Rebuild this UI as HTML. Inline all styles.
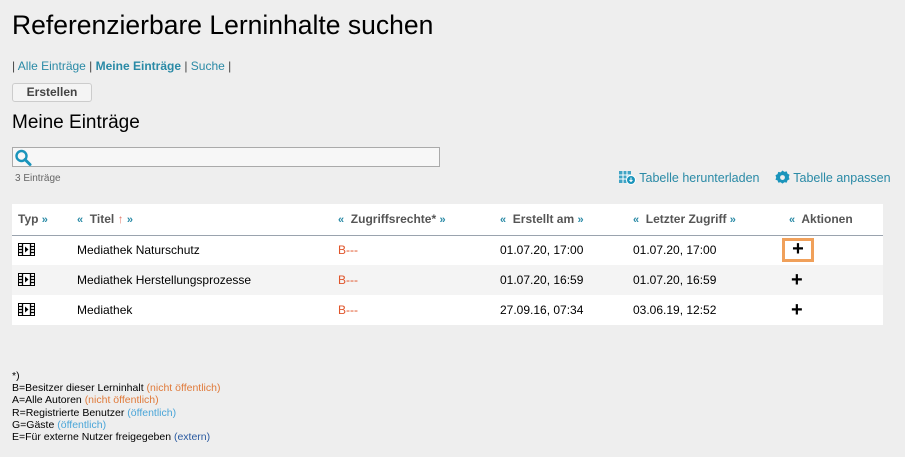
<!DOCTYPE html>
<html><head><meta charset="utf-8"><style>
*{margin:0;padding:0;box-sizing:border-box}
body{width:905px;height:457px;background:#eeeeee;font-family:"Liberation Sans",Arial,sans-serif;position:relative;overflow:hidden;color:#000}
.a{position:absolute;white-space:nowrap}
a{color:#2a8aa6;text-decoration:none}
.h1{left:12px;top:10px;font-size:26.5px}
.nav{left:12px;top:59px;font-size:12px;color:#444}
.btn{left:12px;top:83px;width:80px;height:19px;border:1px solid #ccc;border-radius:3px;background:#f4f4f4;font-size:12px;font-weight:bold;color:#444;text-align:center;line-height:17px}
.h2{left:12px;top:112px;font-size:19px}
.search{left:12px;top:147px;width:428px;height:20px;border:1px solid #aaa;background:#f7f7f7}
.cnt{left:15px;top:173px;font-size:10px;color:#666}
.tool{top:170px;font-size:12.5px;color:#2a8aa6}
table{position:absolute;left:12px;top:204px;width:871px;border-collapse:collapse;font-size:12px}
th{height:31px;text-align:left;font-weight:bold;color:#555;border-bottom:1px solid #9aa3ae;background:#fff;padding:0}
td{height:30px;padding:0}
tr.w td{background:#fff}
tr.g td{background:#f4f4f4}
.r{color:#e0542a}
.sm{color:#2a8aa6;font-size:11px}
.foot{left:12px;top:370px;font-size:10.5px;line-height:12.2px}
.o{color:#e07a3a}.b{color:#4aa5d8}.bl{color:#2a5aa0}
</style></head><body>
<div class="a h1">Referenzierbare Lerninhalte suchen</div>
<div class="a nav">| <a>Alle Einträge</a> | <a style="font-weight:bold">Meine Einträge</a> | <a>Suche</a> |</div>
<div class="a btn">Erstellen</div>
<div class="a h2">Meine Einträge</div>
<div class="a search"><svg width="20" height="18" style="position:absolute;left:1px;top:1px" viewBox="0 0 20 18"><circle cx="7.5" cy="7" r="5" fill="none" stroke="#1a94bb" stroke-width="2.4"/><path d="M11 10.5l5 5" stroke="#1a94bb" stroke-width="3" stroke-linecap="round"/></svg></div>
<div class="a cnt">3 Einträge</div>
<div class="a tool" style="left:619px"><svg width="17" height="15" style="vertical-align:-3px" viewBox="0 0 17 15"><rect x="0" y="1" width="12" height="12" fill="#3fa3c4"/><path d="M0 5h12M0 9h12M4 1v12M8 1v12" stroke="#fff" stroke-width="1"/><circle cx="12" cy="10" r="4.5" fill="#1a94bb" stroke="#fff"/><path d="M12 7.5v4M10.5 10l1.5 1.5 1.5-1.5" stroke="#fff" fill="none"/></svg> Tabelle herunterladen</div>
<div class="a tool" style="left:775px"><svg width="15" height="15" style="vertical-align:-3px" viewBox="0 0 16 16"><path d="M8 0.5l2 1.5 2.5-.5.8 2.4 2.2 1.2-.8 2.4.8 2.4-2.2 1.2-.8 2.4-2.5-.5-2 1.5-2-1.5-2.5.5-.8-2.4L.5 10.4l.8-2.4-.8-2.4 2.2-1.2.8-2.4 2.5.5z" fill="#1a94bb"/><circle cx="8" cy="8" r="2.6" fill="#eee"/></svg> Tabelle anpassen</div>
<table>
<tr><th style="width:65px;padding-left:6px">Typ <span class="sm">»</span></th><th style="width:261px"><span class="sm">«</span>&nbsp; Titel <span style="color:#e07a6a">↑</span> <span class="sm">»</span></th><th style="width:162px"><span class="sm">«</span>&nbsp; Zugriffsrechte* <span class="sm">»</span></th><th style="width:133px"><span class="sm">«</span>&nbsp; Erstellt am <span class="sm">»</span></th><th style="width:156px"><span class="sm">«</span>&nbsp; Letzter Zugriff <span class="sm">»</span></th><th><span class="sm">«</span>&nbsp; Aktionen</th></tr>
<tr class="w"><td style="padding-left:6px"><svg width="17" height="13" viewBox="0 0 17 13" style="vertical-align:-2px"><rect x="0.5" y="0.5" width="16" height="12" fill="#fff" stroke="#000"/><path d="M0 3.5h4M0 6.5h4M0 9.5h4M13 3.5h4M13 6.5h4M13 9.5h4M4.5 0v13M12.5 0v13" stroke="#000" stroke-width="1.3"/><path d="M7 3.5l3.5 3-3.5 3z"/></svg></td><td>Mediathek Naturschutz</td><td class="r">B---</td><td>01.07.20, 17:00</td><td>01.07.20, 17:00</td><td><span style="display:inline-block;width:32px;height:24px;border:3px solid #f0a05a;margin-left:-7px;text-align:center;font-size:20px;font-weight:bold;line-height:17px">+</span></td></tr>
<tr class="g"><td style="padding-left:6px"><svg width="17" height="13" viewBox="0 0 17 13" style="vertical-align:-2px"><rect x="0.5" y="0.5" width="16" height="12" fill="#fff" stroke="#000"/><path d="M0 3.5h4M0 6.5h4M0 9.5h4M13 3.5h4M13 6.5h4M13 9.5h4M4.5 0v13M12.5 0v13" stroke="#000" stroke-width="1.3"/><path d="M7 3.5l3.5 3-3.5 3z"/></svg></td><td>Mediathek Herstellungsprozesse</td><td class="r">B---</td><td>01.07.20, 16:59</td><td>01.07.20, 16:59</td><td><span style="display:inline-block;width:16px;margin-left:2px;font-size:20px;font-weight:bold">+</span></td></tr>
<tr class="w"><td style="padding-left:6px"><svg width="17" height="13" viewBox="0 0 17 13" style="vertical-align:-2px"><rect x="0.5" y="0.5" width="16" height="12" fill="#fff" stroke="#000"/><path d="M0 3.5h4M0 6.5h4M0 9.5h4M13 3.5h4M13 6.5h4M13 9.5h4M4.5 0v13M12.5 0v13" stroke="#000" stroke-width="1.3"/><path d="M7 3.5l3.5 3-3.5 3z"/></svg></td><td>Mediathek</td><td class="r">B---</td><td>27.09.16, 07:34</td><td>03.06.19, 12:52</td><td><span style="display:inline-block;width:16px;margin-left:2px;font-size:20px;font-weight:bold">+</span></td></tr>
</table>
<div class="a foot">*)<br>B=Besitzer dieser Lerninhalt <span class="o">(nicht öffentlich)</span><br>A=Alle Autoren <span class="o">(nicht öffentlich)</span><br>R=Registrierte Benutzer <span class="b">(öffentlich)</span><br>G=Gäste <span class="b">(öffentlich)</span><br>E=Für externe Nutzer freigegeben <span class="bl">(extern)</span></div>
</body></html>
